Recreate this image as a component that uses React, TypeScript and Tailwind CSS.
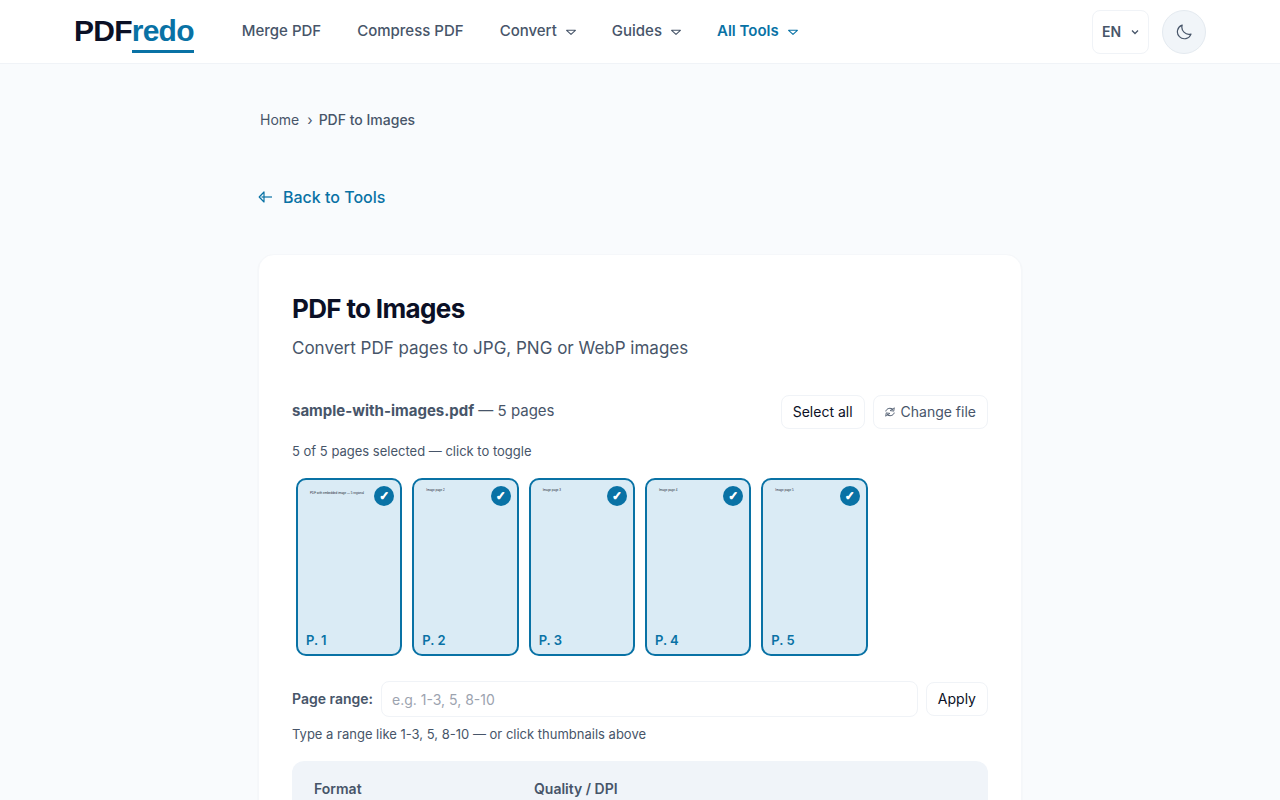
import React, { useState } from 'react';

interface NavItem {
  label: string;
  menu?: boolean;
  active?: boolean;
}

const navItems: NavItem[] = [
  { label: 'Merge PDF' },
  { label: 'Compress PDF' },
  { label: 'Convert', menu: true },
  { label: 'Guides', menu: true },
  { label: 'All Tools', menu: true, active: true },
];

const pages = [
  { id: 1, text: 'PDF with embedded image — 5 regional' },
  { id: 2, text: 'Image page 2' },
  { id: 3, text: 'Image page 3' },
  { id: 4, text: 'Image page 4' },
  { id: 5, text: 'Image page 5' },
];

function TriangleIcon() {
  return (
    <svg className="w-[10px] h-[10px] mt-1" viewBox="0 0 10 10" fill="none" stroke="currentColor" strokeLinejoin="round" aria-hidden="true">
      <path d="M0.6 2.3h8.8L5 6.4z" strokeWidth="1.1" />
    </svg>
  );
}

function BackIcon() {
  return (
    <svg className="w-[14px] h-[14px]" viewBox="0 0 14 14" fill="none" stroke="currentColor" strokeWidth="1.2" strokeLinejoin="round" aria-hidden="true">
      <path d="M1.2 7L6 2v10z" />
      <path d="M3.5 7h10.5" />
    </svg>
  );
}

function MoonIcon() {
  return (
    <svg className="w-4 h-4" viewBox="0 0 16 16" fill="none" stroke="currentColor" strokeWidth="1.2" strokeLinejoin="round" aria-hidden="true">
      <path d="M6.2 1.1A7 7 0 1 0 15 10.1A7.2 7.2 0 0 1 6.2 1.1z" />
    </svg>
  );
}

function RefreshIcon() {
  return (
    <svg className="w-[10px] h-[10px]" viewBox="0 0 10 10" fill="none" stroke="currentColor" strokeWidth="1" aria-hidden="true">
      <path d="M0.8 4.4C1.4 1.4 5.6 0.2 8 2.6M9.2 5.6C8.6 8.6 4.4 9.8 2 7.4" />
      <path d="M9.4 0.8L8.8 4.2L5 3.6zM0.6 9.2L1.2 5.8L5 6.4z" fill="currentColor" fillOpacity="0.3" strokeWidth="0.7" />
    </svg>
  );
}

function Header() {
  return (
    <header className="bg-white border-b border-[#f0f3f7]">
      <div className="max-w-[1180px] mx-auto px-6 h-[63px] flex items-center justify-between">
        <div className="flex items-center">
          <a href="#" className="flex pt-px font-['Liberation_Sans',sans-serif] text-[30px] leading-[38px] font-bold tracking-tight text-[#0b1026]">
            PDF
            <span className="text-[#0972a5] border-b-3 border-[#0972a5]">redo</span>
          </a>
          <nav className="flex items-center gap-9 ml-12 pb-px">
            {navItems.map(item => (
              <a
                key={item.label}
                href="#"
                className={
                  item.active
                    ? 'flex items-center gap-[9px] text-[15px] leading-6 font-semibold text-[#0972a5]'
                    : 'flex items-center gap-[9px] text-[15px] leading-6 font-medium text-[#475569]'
                }
              >
                {item.label}
                {item.menu && <TriangleIcon />}
              </a>
            ))}
          </nav>
        </div>
        <div className="flex items-center gap-[13px]">
          <div className="relative">
            <select
              aria-label="Language"
              className="appearance-none w-[57px] h-11 pl-[9px] rounded-lg border border-[#f0f3f7] bg-white text-sm font-semibold text-[#475569]"
            >
              <option>EN</option>
            </select>
            <svg className="absolute right-[10px] top-[18px] w-2 h-2 pointer-events-none text-[#475569]" viewBox="0 0 8 8" fill="none" stroke="currentColor" strokeWidth="1.3" aria-hidden="true">
              <path d="M1 2.5l3 3 3-3" />
            </svg>
          </div>
          <button
            type="button"
            aria-label="Toggle dark mode"
            className="flex items-center justify-center w-11 h-11 rounded-full border border-[#e4eaf0] bg-[#f1f5f9] text-[#475569]"
          >
            <MoonIcon />
          </button>
        </div>
      </div>
    </header>
  );
}

export default function App() {
  const [selected, setSelected] = useState<number[]>(pages.map(p => p.id));
  const [range, setRange] = useState('');

  const togglePage = (id: number) => {
    setSelected(selected.includes(id) ? selected.filter(p => p !== id) : [...selected, id]);
  };

  const applyRange = () => {
    const wanted = range.split(',').flatMap(part => {
      const [from, to] = part.split('-').map(Number);
      return pages.map(p => p.id).filter(id => id >= from && id <= (to || from));
    });
    setSelected(wanted);
  };

  return (
    <div className="min-h-screen bg-[#f9fbfd] font-['Inter',sans-serif] text-[#475569]">
      <Header />

      <main className="max-w-[812px] mx-auto px-6 pt-[46px] pb-16">
        <nav aria-label="Breadcrumb" className="flex items-center pl-[2px] text-sm leading-5">
          <a href="#">Home</a>
          <span className="ml-2 mr-[6px]">›</span>
          <span className="font-medium">PDF to Images</span>
        </nav>

        <a href="#" className="inline-flex items-center gap-[11px] mt-[55px] text-base font-medium text-[#0972a5]">
          <BackIcon />
          Back to Tools
        </a>

        <section className="mt-11 p-[33px] rounded-2xl border border-[#f5f7fa] bg-white shadow-xs">
          <h1 className="mt-[5px] text-[26px] leading-8 font-bold tracking-tight text-[#0b1026]">PDF to Images</h1>
          <p className="mt-[9px] text-[17px] leading-7">Convert PDF pages to JPG, PNG or WebP images</p>

          {/* File info */}
          <div className="flex items-center justify-between mt-[33px]">
            <p className="text-[15px] leading-6 pb-[2px]">
              <strong className="font-bold">sample-with-images.pdf</strong> — 5 pages
            </p>
            <div className="flex gap-2">
              <button
                type="button"
                onClick={() => setSelected(pages.map(p => p.id))}
                className="h-[34px] px-[11px] rounded-lg border border-[#f0f3f7] bg-white text-sm text-[#0b1026]"
              >
                Select all
              </button>
              <button
                type="button"
                className="flex items-center gap-[6px] h-[34px] px-[11px] rounded-lg border border-[#f0f3f7] bg-white text-sm"
              >
                <RefreshIcon />
                Change file
              </button>
            </div>
          </div>
          <p className="mt-3 text-[13px] leading-5">{selected.length} of 5 pages selected — click to toggle</p>

          {/* Thumbnails */}
          <div className="grid grid-cols-[repeat(auto-fill,minmax(100px,1fr))] gap-[10px] mt-[13px] p-1">
            {pages.map(page => (
              <button
                key={page.id}
                type="button"
                aria-pressed={selected.includes(page.id)}
                onClick={() => togglePage(page.id)}
                className={
                  selected.includes(page.id)
                    ? 'relative flex flex-col justify-between h-[178px] px-2 py-[6px] rounded-[10px] border-2 border-[#0972a5] bg-[#daebf5] text-left'
                    : 'relative flex flex-col justify-between h-[178px] px-2 py-[6px] rounded-[10px] border-2 border-[#e2e8f0] bg-white text-left'
                }
              >
                <span
                  className={
                    page.id === 1
                      ? "pl-1 pt-[5px] font-['Liberation_Sans',sans-serif] text-[3px] leading-[4px] text-[#1f2937] whitespace-nowrap"
                      : "pl-1 pt-[2px] font-['Liberation_Sans',sans-serif] text-[3px] leading-[4px] text-[#1f2937] whitespace-nowrap"
                  }
                >
                  {page.text}
                </span>
                {selected.includes(page.id) && (
                  <span className="absolute top-[6px] right-[6px] flex items-center justify-center w-5 h-5 rounded-full bg-[#0972a5] text-white font-['DejaVu_Sans',sans-serif] text-xs font-bold [-webkit-text-stroke:1px_white]">
                    ✓
                  </span>
                )}
                <span className="text-[13px] leading-4 font-semibold text-[#0972a5]">P. {page.id}</span>
              </button>
            ))}
          </div>

          {/* Page range */}
          <div className="flex items-center gap-2 mt-[21px]">
            <label htmlFor="page-range" className="text-sm font-semibold">
              Page range:
            </label>
            <input
              id="page-range"
              type="text"
              value={range}
              onChange={e => setRange(e.target.value)}
              placeholder="e.g. 1-3, 5, 8-10"
              className="flex-1 min-w-0 h-9 px-[10px] rounded-lg border border-[#f0f3f7] bg-white text-sm placeholder:text-[#9ca3af]"
            />
            <button
              type="button"
              onClick={applyRange}
              className="h-[34px] px-[11px] rounded-lg border border-[#f0f3f7] bg-white text-sm text-[#0b1026]"
            >
              Apply
            </button>
          </div>
          <p className="mt-[7px] text-[13px] leading-5">Type a range like 1-3, 5, 8-10 — or click thumbnails above</p>

          {/* Output options */}
          <div className="grid grid-cols-[204px_204px] gap-4 mt-[17px] px-[22px] py-[18px] rounded-xl bg-[#f0f4f9]">
            <div className="flex flex-col gap-2">
              <label htmlFor="format" className="text-sm font-semibold">Format</label>
              <select id="format" className="h-10 px-3 rounded-lg border border-[#e2e8f0] bg-white text-sm">
                <option>JPG</option>
                <option>PNG</option>
                <option>WebP</option>
              </select>
            </div>
            <div className="flex flex-col gap-2">
              <label htmlFor="quality" className="text-sm font-semibold">Quality / DPI</label>
              <select id="quality" className="h-10 px-3 rounded-lg border border-[#e2e8f0] bg-white text-sm">
                <option>150 DPI</option>
                <option>300 DPI</option>
              </select>
            </div>
          </div>
        </section>
      </main>
    </div>
  );
}
